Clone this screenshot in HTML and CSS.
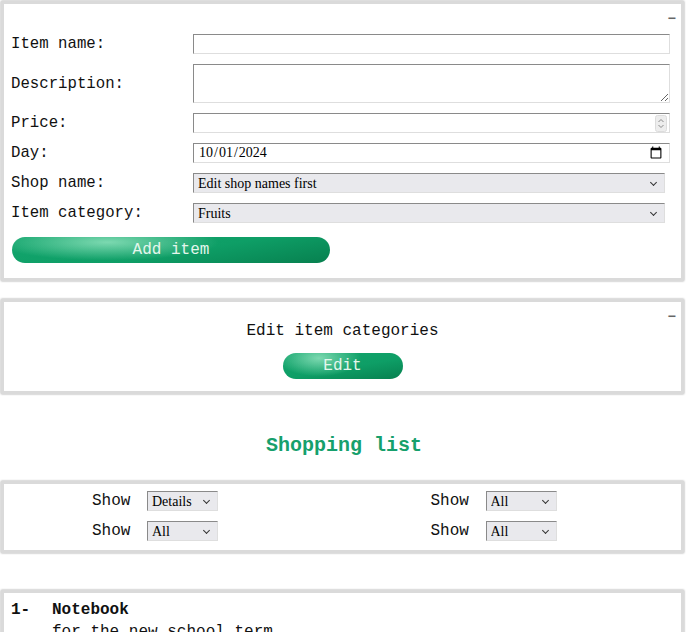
FILE: index.html
```html
<!DOCTYPE html>
<html lang="en">

<head>
    <meta charset="UTF-8">
    <meta name="viewport" content="width=device-width, initial-scale=1.0">
    <title>Shopping list</title>
    <link rel="stylesheet" href="styles.css">
</head>

<body>
    <div class="page">
        <div class="panel add-panel">
            <span class="collapse">&minus;</span>

            <div class="form-row">
                <label for="itemname">Item name:</label>
                <input type="text" id="itemname" class="field" />
            </div>
            <div class="form-row">
                <label for="description">Description:</label>
                <textarea id="description" class="field area"></textarea>
            </div>
            <div class="form-row">
                <label for="price">Price:</label>
                <div class="number-wrap">
                    <input type="number" id="price" class="field" />
                    <svg class="spinner" width="12" height="17" viewBox="0 0 12 17">
                        <rect x="0.5" y="0.5" width="11" height="16" rx="2" fill="#ededed" stroke="#dcdcdc" />
                        <path d="M3.5 7 L6 4.5 L8.5 7" fill="none" stroke="#8a8a8a" stroke-width="1" />
                        <path d="M3.5 10 L6 12.5 L8.5 10" fill="none" stroke="#8a8a8a" stroke-width="1" />
                    </svg>
                </div>
            </div>
            <div class="form-row">
                <label for="day">Day:</label>
                <input type="date" id="day" class="field" value="2024-10-01" />
            </div>
            <div class="form-row">
                <label for="shop">Shop name:</label>
                <div class="select-wrap wide">
                    <select id="shop" class="field pick">
                        <option>Edit shop names first</option>
                    </select>
                </div>
            </div>
            <div class="form-row">
                <label for="category">Item category:</label>
                <div class="select-wrap wide">
                    <select id="category" class="field pick">
                        <option>Fruits</option>
                        <option>Vegetables</option>
                        <option>Stationery</option>
                    </select>
                </div>
            </div>

            <button class="green-btn add-btn">Add item</button>
        </div>

        <div class="panel edit-panel">
            <span class="collapse">&minus;</span>
            <p class="edit-title">Edit item categories</p>
            <button class="green-btn edit-btn">Edit</button>
        </div>

        <h2 class="list-title">Shopping list</h2>

        <div class="panel filter-panel">
            <div class="filter">
                <span>Show</span>
                <div class="select-wrap">
                    <select class="field pick small-pick">
                        <option>Details</option>
                        <option>Names</option>
                    </select>
                </div>
            </div>
            <div class="filter">
                <span>Show</span>
                <div class="select-wrap">
                    <select class="field pick small-pick">
                        <option>All</option>
                    </select>
                </div>
            </div>
            <div class="filter">
                <span>Show</span>
                <div class="select-wrap">
                    <select class="field pick small-pick">
                        <option>All</option>
                    </select>
                </div>
            </div>
            <div class="filter">
                <span>Show</span>
                <div class="select-wrap">
                    <select class="field pick small-pick">
                        <option>All</option>
                    </select>
                </div>
            </div>
        </div>

        <div class="panel list-panel">
            <div class="item-head">
                <span class="item-no">1-</span>
                <span class="item-name">Notebook</span>
            </div>
            <p class="item-desc">for the new school term</p>
        </div>
    </div>
</body>

</html>
```

FILE: styles.css
```css
* {
    margin: 0;
    padding: 0;
    box-sizing: border-box;
}

body {
    font-family: "Liberation Mono", "Courier New", monospace;
    font-size: 16px;
    color: #111;
    background: #fff;
    overflow: hidden;
}

.page {
    display: flex;
    flex-direction: column;
}

.panel {
    position: relative;
    margin: 1px 4px 17px 1px;
    border: 3px solid #dadada;
    box-shadow: 0 0 2px #9a9a9a;
    background: #fff;
}

.collapse {
    position: absolute;
    top: 7px;
    right: 5px;
    font-size: 14px;
    font-weight: bold;
    color: #666;
}

/* add item form */
.add-panel {
    padding: 30px 11px 15px 7px;
}

.form-row {
    display: grid;
    grid-template-columns: 182px 1fr;
    align-items: center;
    margin-bottom: 10px;
    font-size: 15.7px;
}

.field {
    font-family: "Liberation Serif", "Times New Roman", serif;
    font-size: 14px;
    color: #000;
    height: 20px;
    border: 1px solid;
    border-color: #8a8a8a #dedede #dedede #8a8a8a;
    background: #fff;
    padding: 0 4px;
    width: 100%;
}

.area {
    height: 39px;
    resize: both;
}

.number-wrap {
    position: relative;
}

.number-wrap input::-webkit-inner-spin-button,
.number-wrap input::-webkit-outer-spin-button {
    -webkit-appearance: none;
    margin: 0;
}

.number-wrap input {
    -moz-appearance: textfield;
}

.spinner {
    position: absolute;
    right: 3px;
    top: 2px;
}

.select-wrap {
    position: relative;
}

.select-wrap.wide {
    width: calc(100% - 5px);
}

.select-wrap::after {
    content: "";
    position: absolute;
    right: 9px;
    top: 7px;
    width: 4px;
    height: 4px;
    border-right: 1.5px solid #333;
    border-bottom: 1.5px solid #333;
    transform: rotate(45deg);
    pointer-events: none;
}

.pick {
    -webkit-appearance: none;
    appearance: none;
    background: #e9e9ed;
    padding: 0 18px 0 4px;
}

.green-btn {
    font-family: "Liberation Mono", "Courier New", monospace;
    font-size: 16px;
    color: #e4f6ec;
    height: 26px;
    border: none;
    border-radius: 13px;
    background:
        radial-gradient(ellipse 35% 70% at 30% 20%, rgba(160, 235, 200, 0.75), rgba(160, 235, 200, 0) 100%),
        linear-gradient(170deg, #13a56d 0%, #0e9e66 55%, #07804f 100%);
}

.add-btn {
    width: 318px;
    margin-top: 4px;
    margin-left: 1px;
}

/* edit categories */
.edit-panel {
    padding: 19px 0 12px;
    text-align: center;
}

.edit-title {
    line-height: 20px;
    margin-bottom: 12px;
}

.edit-btn {
    width: 120px;
}

.list-title {
    margin: 23px 0 22px;
    text-align: center;
    font-size: 20px;
    line-height: 24px;
    color: #16a06c;
}

/* filters */
.filter-panel {
    display: grid;
    grid-template-columns: 1fr 1fr;
    row-gap: 10px;
    padding: 7px 0 9px;
}

.filter {
    display: flex;
    align-items: center;
    padding-left: 88px;
}

.filter span {
    width: 55px;
}

.small-pick {
    width: 71px;
}

/* list */
.list-panel {
    margin-top: 20px;
    padding: 7px 7px 10px;
}

.item-head {
    display: flex;
    font-weight: bold;
    line-height: 20px;
}

.item-no {
    width: 41px;
}

.item-desc {
    padding-left: 41px;
    line-height: 24px;
}
```
